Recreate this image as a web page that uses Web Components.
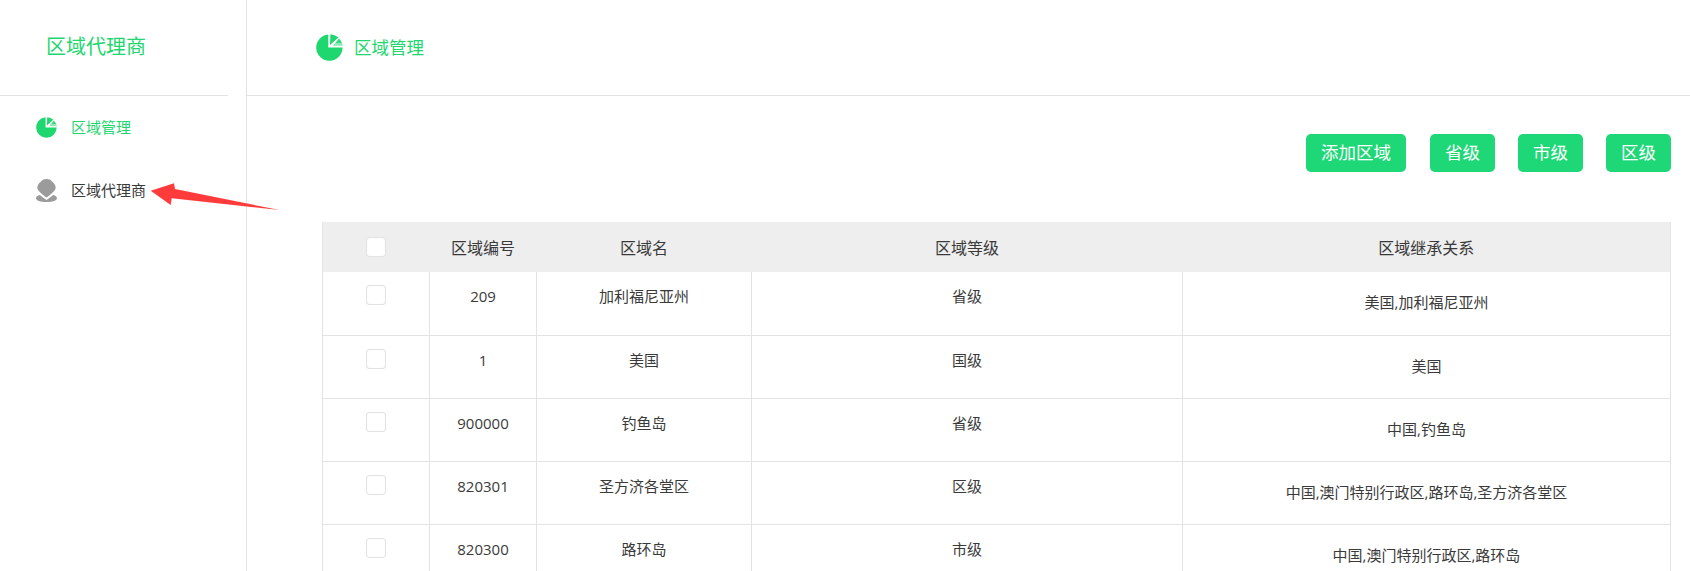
<!DOCTYPE html>
<html lang="zh">
<head>
<meta charset="utf-8">
<title>区域管理</title>
<style>
  html, body { margin: 0; height: 100%; overflow: hidden; background: #fff; }
  body { font-family: "Open Sans", "Noto Sans CJK SC", sans-serif; color: #3a3a3a; }
  agent-layout { height: 571px; }
</style>
</head>
<body>
<agent-layout>
  <side-nav slot="side" heading="区域代理商">
    <nav-item icon="pie" active>区域管理</nav-item>
    <nav-item icon="pin">区域代理商</nav-item>
  </side-nav>
  <top-bar heading="区域管理"></top-bar>
  <tool-bar>
    <action-button>添加区域</action-button>
    <action-button>省级</action-button>
    <action-button>市级</action-button>
    <action-button>区级</action-button>
  </tool-bar>
  <region-table></region-table>
</agent-layout>

<script>
const PIE_ICON = `
  <svg viewBox="0 0 27 27" width="100%" height="100%" fill="#1ed76f">
    <path d="M12.3 0.4 V13.6 H26.6 A13.2 13.2 0 1 1 12.3 0.4 Z" />
    <path d="M14 11 L14.4 0.2 A13.2 13.2 0 0 1 22.4 3.4 Z" />
    <path d="M17.2 11.8 L23 4.4 A13.2 13.2 0 0 1 25.9 9 Z" fill="#35da80" />
    <path d="M17.2 11.8 L19.4 9 L25.9 9 A13.2 13.2 0 0 1 27 11.8 Z" fill="#8fe9b6" />
  </svg>`;

const PIN_ICON = `
  <svg viewBox="0 0 21 23" width="100%" height="100%" fill="#9b9b9b">
    <path d="M10.5 0 C13 0 14.5 .8 16 2.4 C18.5 4.6 20 6.6 19.6 9.2 C19.2 11.8 14.5 15.5 10.5 18.6 C6.5 15.5 1.8 11.8 1.4 9.2 C1 6.6 2.5 4.6 5 2.4 C6.5 .8 8 0 10.5 0 Z" />
    <path d="M3.8 16 C5.8 17.6 8.2 19.4 10.5 21 C12.8 19.4 15.2 17.6 17.2 16 C19.6 16.6 21 17.8 21 19.2 C21 21.4 16.6 23 10.5 23 C4.4 23 0 21.4 0 19.2 C0 17.8 1.4 16.6 3.8 16 Z" />
  </svg>`;

class AgentLayout extends HTMLElement {
  constructor() {
    super();
    this.attachShadow({ mode: "open" });
    this.shadowRoot.innerHTML = `
      <style>
        :host { display: grid; grid-template-columns: 246px 1fr; position: relative; overflow: hidden; }
        main { border-left: 1px solid #e3e3e3; min-width: 0; }
        svg.arrow { position: absolute; left: 0; top: 0; pointer-events: none; }
      </style>
      <slot name="side"></slot>
      <main><slot></slot></main>
      <svg class="arrow" width="300" height="230" viewBox="0 0 300 230">
        <path d="M150.7 190.7 L174 183.3 L175 189 L279.5 210 L171.7 198.3 L170.7 205 Z" fill="#ff3b3b" />
      </svg>
    `;
  }
}

class SideNav extends HTMLElement {
  constructor() {
    super();
    this.attachShadow({ mode: "open" });
  }

  connectedCallback() {
    this.shadowRoot.innerHTML = `
      <style>
        :host { display: block; }
        h1 {
          width: 182px;
          height: 62px;
          margin: 0;
          padding: 33px 0 0 46px;
          border-bottom: 1px solid #e3e3e3;
          font-size: 20px;
          font-weight: normal;
          line-height: 28px;
          color: #1ed76f;
        }
        .items { display: flex; flex-direction: column; }
      </style>
      <h1>${this.getAttribute("heading")}</h1>
      <div class="items"><slot></slot></div>
    `;
  }
}

class NavItem extends HTMLElement {
  constructor() {
    super();
    this.attachShadow({ mode: "open" });
  }

  connectedCallback() {
    const icon = this.getAttribute("icon") === "pie" ? PIE_ICON : PIN_ICON;
    const pin = this.getAttribute("icon") === "pin";
    this.shadowRoot.innerHTML = `
      <style>
        :host {
          display: flex;
          align-items: center;
          gap: 14px;
          height: 63px;
          padding-left: 36px;
          font-size: 15px;
          color: #3a3a3a;
        }
        :host([active]) { color: #1ed76f; }
        .icon { width: 21px; height: ${pin ? 23 : 21}px; flex: none; }
        .label { padding-bottom: 2px; }
      </style>
      <span class="icon">${icon}</span>
      <span class="label"><slot></slot></span>
    `;
  }
}

class TopBar extends HTMLElement {
  constructor() {
    super();
    this.attachShadow({ mode: "open" });
  }

  connectedCallback() {
    this.shadowRoot.innerHTML = `
      <style>
        :host {
          display: flex;
          align-items: center;
          gap: 11px;
          height: 95px;
          padding-left: 69px;
          border-bottom: 1px solid #e3e3e3;
          font-size: 17.5px;
          color: #1ed76f;
        }
        .icon { width: 27px; height: 27px; flex: none; }
        .label { padding-bottom: 2px; }
      </style>
      <span class="icon">${PIE_ICON}</span>
      <span class="label">${this.getAttribute("heading")}</span>
    `;
  }
}

class ToolBar extends HTMLElement {
  constructor() {
    super();
    this.attachShadow({ mode: "open" });
    this.shadowRoot.innerHTML = `
      <style>
        :host {
          display: flex;
          justify-content: flex-end;
          gap: 23px;
          padding: 38px 19px 50px 0;
        }
        ::slotted(:first-child) { margin-right: 1px; }
      </style>
      <slot></slot>
    `;
  }
}

class ActionButton extends HTMLElement {
  constructor() {
    super();
    this.attachShadow({ mode: "open" });
    this.shadowRoot.innerHTML = `
      <style>
        :host {
          display: block;
          height: 36px;
          padding: 0 15px 2px;
          border-radius: 5px;
          background: #1ed776;
          color: #fff;
          font-size: 17.5px;
          line-height: 36px;
        }
      </style>
      <slot></slot>
    `;
  }
}

class CheckBox extends HTMLElement {
  constructor() {
    super();
    this.attachShadow({ mode: "open" });
    this.shadowRoot.innerHTML = `
      <style>
        :host {
          display: block;
          width: 20px;
          height: 20px;
          box-sizing: border-box;
          border: 1px solid #e3e3e3;
          border-radius: 3px;
          background: #fff;
          box-shadow: inset 0 0 1px #e3e3e3;
        }
      </style>
    `;
  }
}

class RegionTable extends HTMLElement {
  constructor() {
    super();
    this.attachShadow({ mode: "open" });
    this.columns = ["区域编号", "区域名", "区域等级", "区域继承关系"];
    this.rows = [
      ["209", "加利福尼亚州", "省级", "美国,加利福尼亚州"],
      ["1", "美国", "国级", "美国"],
      ["900000", "钓鱼岛", "省级", "中国,钓鱼岛"],
      ["820301", "圣方济各堂区", "区级", "中国,澳门特别行政区,路环岛,圣方济各堂区"],
      ["820300", "路环岛", "市级", "中国,澳门特别行政区,路环岛"],
    ];
  }

  connectedCallback() {
    const body = this.rows
      .map(
        (row) => `
        <tr>
          <td><check-box></check-box></td>
          <td>${row[0]}</td>
          <td>${row[1]}</td>
          <td>${row[2]}</td>
          <td class="path">${row[3]}</td>
        </tr>`,
      )
      .join("");

    this.shadowRoot.innerHTML = `
      <style>
        :host { display: block; margin: 0 19px 0 75px; }
        table {
          width: 100%;
          table-layout: fixed;
          border-collapse: collapse;
          text-align: center;
        }
        th {
          height: 50px;
          padding: 0;
          background: #eee;
          font-size: 16px;
          font-weight: normal;
        }
        th:first-child { border-left: 1px solid #e3e3e3; }
        th:last-child { border-right: 1px solid #e3e3e3; }
        td {
          height: 63px;
          padding: 13px 0 0;
          box-sizing: border-box;
          border: 1px solid #e3e3e3;
          border-top: 0;
          font-size: 15px;
          line-height: 22px;
          vertical-align: top;
        }
        td.path { padding-top: 19px; }
        check-box { margin: 0 auto; }
        th check-box { margin-top: -1px; }
      </style>
      <table>
        <colgroup>
          <col style="width: 107px">
          <col style="width: 107px">
          <col style="width: 215px">
          <col style="width: 431px">
          <col>
        </colgroup>
        <thead>
          <tr>
            <th><check-box></check-box></th>
            ${this.columns.map((c) => `<th>${c}</th>`).join("")}
          </tr>
        </thead>
        <tbody>${body}</tbody>
      </table>
    `;
  }
}

customElements.define("agent-layout", AgentLayout);
customElements.define("side-nav", SideNav);
customElements.define("nav-item", NavItem);
customElements.define("top-bar", TopBar);
customElements.define("tool-bar", ToolBar);
customElements.define("action-button", ActionButton);
customElements.define("check-box", CheckBox);
customElements.define("region-table", RegionTable);
</script>
</body>
</html>
